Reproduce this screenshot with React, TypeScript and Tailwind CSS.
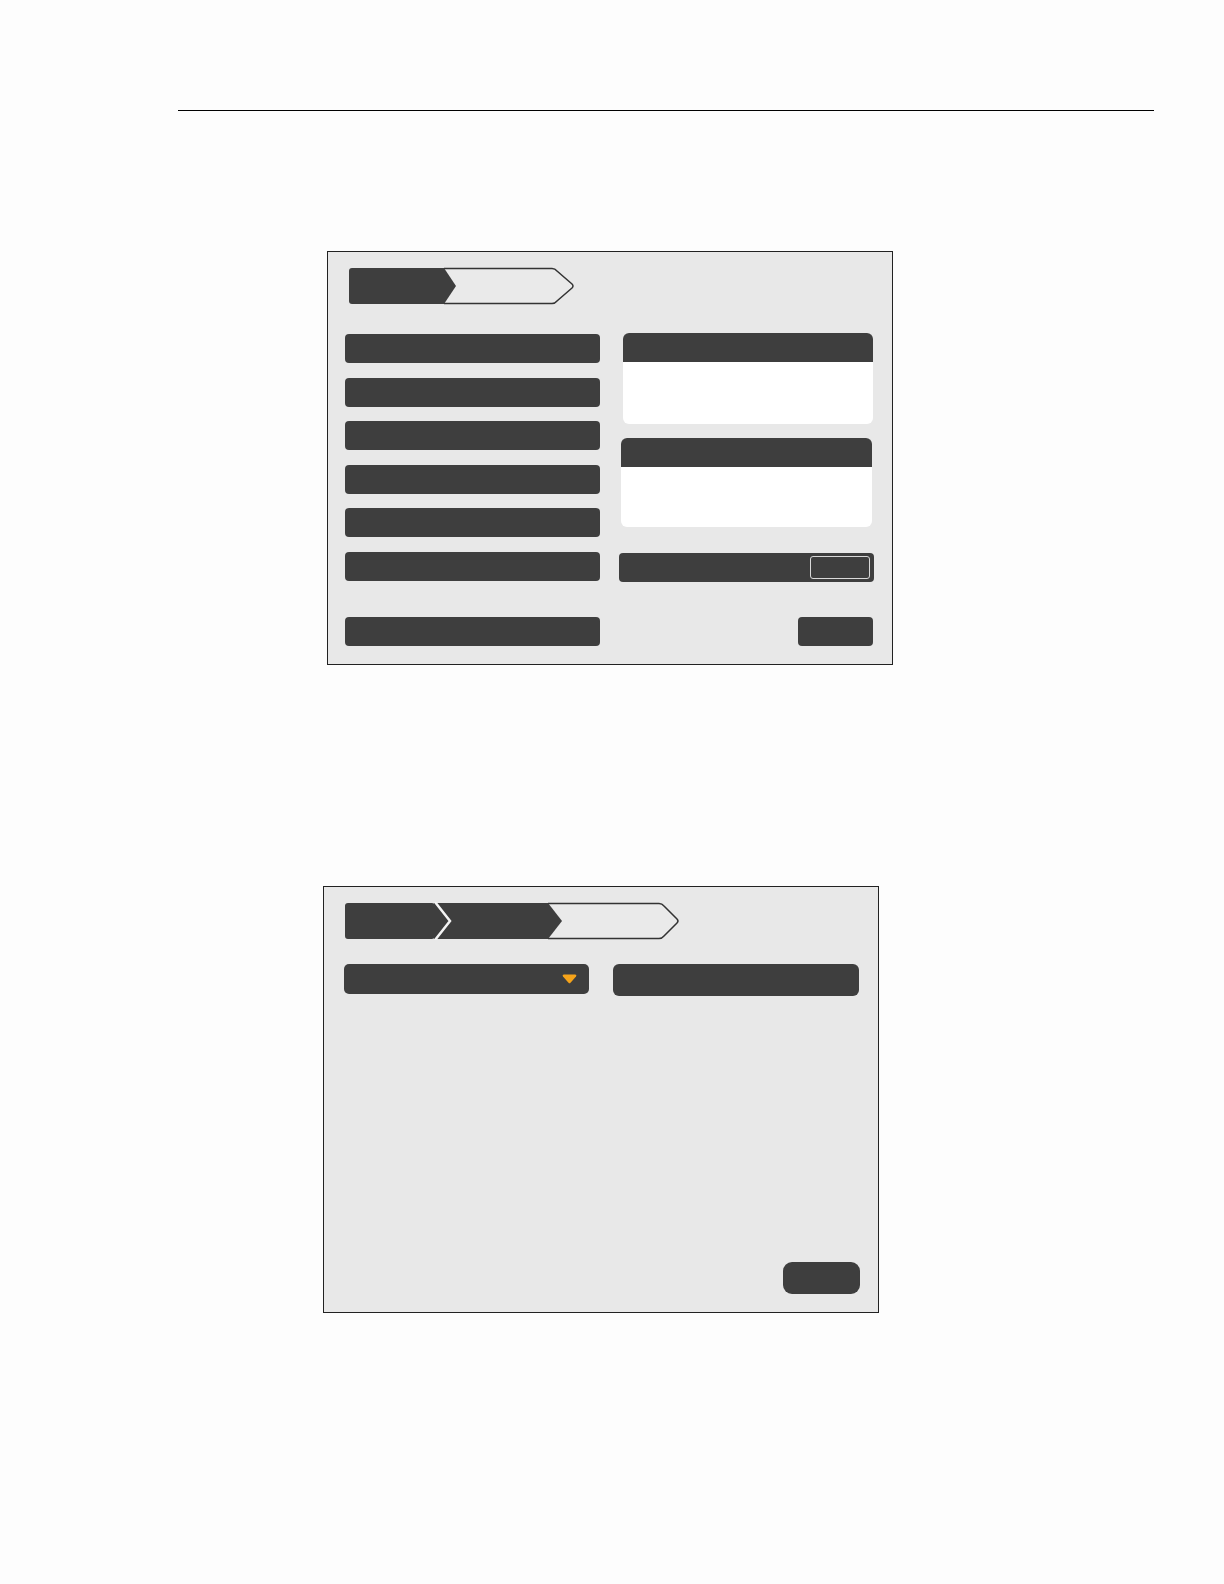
import React from "react"

const bar = "bg-[#3e3e3e] rounded-[4px]"

function CrumbTwo() {
  return (
    <svg width="230" height="38" viewBox="0 0 230 38" className="block">
      <path
        d="M 96 1.5 H 204 Q 207 1.5 209 4 L 224 17 Q 226 19 224 21 L 209 34 Q 207 36.5 204 36.5 H 96"
        fill="#eaeaea"
        stroke="#333"
        strokeWidth="1.5"
      />
      <path d="M 4 1 H 96 L 108 19 L 96 37 H 4 Q 1 37 1 34 V 4 Q 1 1 4 1 Z" fill="#3e3e3e" />
    </svg>
  )
}

function CrumbThree() {
  return (
    <svg width="340" height="38" viewBox="0 0 340 38" className="block">
      <path
        d="M 204 1.5 H 315 Q 318 1.5 320 4 L 333 17 Q 335 19 333 21 L 320 34 Q 318 36.5 315 36.5 H 204"
        fill="#eaeaea"
        stroke="#333"
        strokeWidth="1.5"
      />
      <path d="M 90 1 H 204 L 218 19 L 204 37 H 90 Z" fill="#3e3e3e" />
      <path d="M 4 1 H 88 Q 91 1 93 4 L 104 17 Q 105 19 104 21 L 93 34 Q 91 37 88 37 H 4 Q 1 37 1 34 V 4 Q 1 1 4 1 Z" fill="#3e3e3e" />
      <path d="M 91 0 L 106 19 L 91 38" fill="none" stroke="#f4f4f4" strokeWidth="2.5" />
    </svg>
  )
}

function Caret() {
  return (
    <svg width="15" height="10" viewBox="0 0 15 10" className="block">
      <path d="M 2 0.5 H 13 Q 15 0.5 14 2.5 L 8.5 8.8 Q 7.5 9.8 6.5 8.8 L 1 2.5 Q 0 0.5 2 0.5 Z" fill="#f5a31a" />
    </svg>
  )
}

function InfoBox({ height }: { height: string }) {
  return (
    <div className={`flex flex-col rounded-[6px] overflow-hidden bg-white ${height}`}>
      <div className="h-[29px] bg-[#3e3e3e]" />
      <div className="flex-1" />
    </div>
  )
}

export default function App() {
  return (
    <div className="w-[1224px] min-h-[1584px] bg-[#fdfdfd] pt-[110px] font-['Liberation_Sans',sans-serif]">
      <div className="ml-[178px] w-[976px] h-px bg-black" />

      {/* first screen */}
      <div className="mt-[140px] ml-[327px] w-[566px] h-[414px] border border-[#222] bg-[#e8e8e8] flex flex-col">
        <div className="pl-[20px] pt-[15px]">
          <CrumbTwo />
        </div>
        <div className="grid grid-cols-[255px_255px] gap-x-[19px] pl-[17px] pt-[29px]">
          <div className="flex flex-col gap-[14.6px]">
            <div className={`h-[29px] ${bar}`} />
            <div className={`h-[29px] ${bar}`} />
            <div className={`h-[29px] ${bar}`} />
            <div className={`h-[29px] ${bar}`} />
            <div className={`h-[29px] ${bar}`} />
            <div className={`h-[29px] ${bar}`} />
            <div className={`h-[29px] mt-[21.4px] ${bar}`} />
          </div>
          <div className="flex flex-col -mt-[1px]">
            <div className="ml-[4px] w-[250px]">
              <InfoBox height="h-[91px]" />
            </div>
            <div className="ml-[2px] w-[251px] mt-[14px]">
              <InfoBox height="h-[89px]" />
            </div>
            <div className={`mt-[25.5px] h-[29px] ${bar} flex items-center justify-end pr-[4px]`}>
              <div className="w-[60px] h-[23px] rounded-[3px] border border-[#d8d8d8]" />
            </div>
            <div className="mt-[35px] flex justify-end pr-[1px]">
              <div className={`w-[75px] h-[29px] ${bar}`} />
            </div>
          </div>
        </div>
      </div>

      {/* second screen */}
      <div className="mt-[221px] ml-[323px] w-[556px] h-[427px] border border-[#222] bg-[#e8e8e8] flex flex-col pb-[18px]">
        <div className="pl-[20px] pt-[15px]">
          <CrumbThree />
        </div>
        <div className="flex gap-[24px] pl-[20px] pt-[24px]">
          <div className={`w-[245px] h-[30px] bg-[#3e3e3e] rounded-[5px] flex items-center justify-end pr-[12px]`}>
            <Caret />
          </div>
          <div className="w-[246px] h-[32px] bg-[#3e3e3e] rounded-[6px]" />
        </div>
        <div className="flex-1" />
        <div className="flex justify-end pr-[18px]">
          <div className="w-[77px] h-[32px] bg-[#3e3e3e] rounded-[9px]" />
        </div>
      </div>
    </div>
  )
}
